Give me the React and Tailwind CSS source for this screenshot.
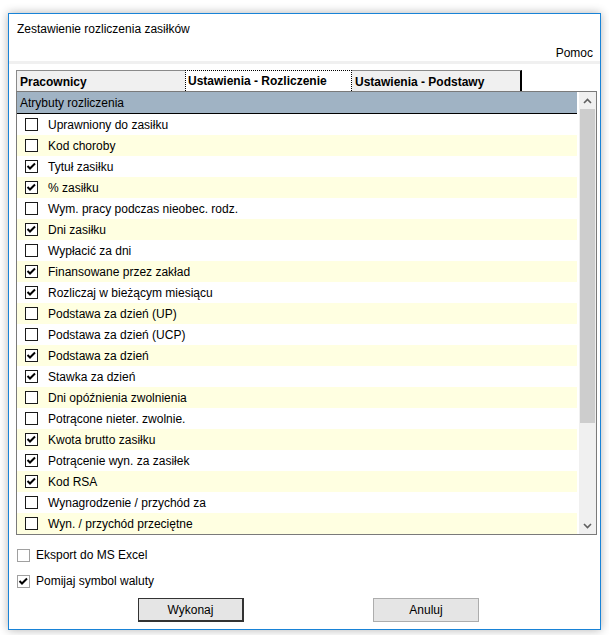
import React from 'react';

const rows = [
  ['Uprawniony do zasiłku', false],
  ['Kod choroby', false],
  ['Tytuł zasiłku', true],
  ['% zasiłku', true],
  ['Wym. pracy podczas nieobec. rodz.', false],
  ['Dni zasiłku', true],
  ['Wypłacić za dni', false],
  ['Finansowane przez zakład', true],
  ['Rozliczaj w bieżącym miesiącu', true],
  ['Podstawa za dzień (UP)', false],
  ['Podstawa za dzień (UCP)', false],
  ['Podstawa za dzień', true],
  ['Stawka za dzień', true],
  ['Dni opóźnienia zwolnienia', false],
  ['Potrącone nieter. zwolnie.', false],
  ['Kwota brutto zasiłku', true],
  ['Potrącenie wyn. za zasiłek', true],
  ['Kod RSA', true],
  ['Wynagrodzenie / przychód za', false],
  ['Wyn. / przychód przeciętne', false],
];

const Check = () => (
  <svg width="11" height="11" viewBox="0 0 11 11">
    <polyline points="1.5,5 4,7.5 9,2.5" fill="none" stroke="#000" strokeWidth="2" />
  </svg>
);

const Box = ({ checked, flat }) => (
  <div
    className={`w-[13px] h-[13px] shrink-0 flex items-center justify-center bg-white border ${
      flat ? 'border-[#a0a0a0]' : 'border-[#1a1a1a]'
    }`}
  >
    {checked && <Check />}
  </div>
);

const App = () => {
  return (
    <div
      className="w-[609px] h-[635px] bg-white pl-[8px] pt-[13px] text-[12px] text-black"
      style={{ fontFamily: '"Liberation Sans", Arial, sans-serif' }}
    >
      <div className="w-[593px] h-[617px] border border-[#1883d7] bg-white flex flex-col shadow-[0_0_9px_rgba(0,0,0,0.3)]">
        {/* Title */}
        <div className="h-[30px] pl-[8px] flex items-center">Zestawienie rozliczenia zasiłków</div>
        {/* Menu */}
        <div className="h-[17px] pr-[7px] flex items-center justify-end">Pomoc</div>
        <div className="h-[3px] bg-[#f0f0f0]" />
        <div className="h-[6px]" />

        <div className="ml-[7px]">
          {/* Tabs */}
          <div className="flex h-[21px]">
            <div className="w-[169px] bg-[#f0f0f0] border-l border-t border-[#8a8a8a] font-bold pl-[3px] pt-[4px] leading-[15px]">
              Pracownicy
            </div>
            <div className="w-[167px] bg-white border border-dotted border-black border-b-0 font-bold pl-[2px] pt-[3px] leading-[15px]">
              Ustawienia - Rozliczenie
            </div>
            <div className="w-[170px] bg-[#f0f0f0] border-t border-[#8a8a8a] border-r-2 border-r-black font-bold pl-[3px] pt-[4px] leading-[15px]">
              Ustawienia - Podstawy
            </div>
          </div>

          {/* List */}
          <div className="w-[581px] h-[444px] border border-[#7a7a7a] flex">
            <div className="w-[560px] flex flex-col">
              <div className="h-[21px] bg-[#a0b3c4] pl-[3px] flex items-center">Atrybuty rozliczenia</div>
              <div className="h-[1px] bg-black" />
              {rows.map(([label, checked], i) => (
                <div
                  key={label}
                  className={`h-[21px] shrink-0 flex items-center pl-[8px] gap-[10px] ${
                    i % 2 === 1 ? 'bg-[#ffffe1]' : 'bg-white'
                  }`}
                >
                  <Box checked={checked} />
                  <span>{label}</span>
                </div>
              ))}
            </div>
            <div className="w-[2px]" />
            {/* Scrollbar */}
            <div className="w-[17px] bg-[#f0f0f0] flex flex-col">
              <div className="h-[17px] flex items-center justify-center">
                <svg width="9" height="6" viewBox="0 0 9 6">
                  <polyline points="1,5 4.5,1.5 8,5" fill="none" stroke="#606060" strokeWidth="1.6" />
                </svg>
              </div>
              <div className="h-[314px] mx-[1px] bg-[#cdcdcd]" />
              <div className="flex-1" />
              <div className="h-[17px] flex items-center justify-center">
                <svg width="9" height="6" viewBox="0 0 9 6">
                  <polyline points="1,1 4.5,4.5 8,1" fill="none" stroke="#606060" strokeWidth="1.6" />
                </svg>
              </div>
            </div>
          </div>
        </div>

        {/* Options */}
        <div className="mt-[13px] pl-[8px] flex items-center gap-[6px] h-[14px]">
          <Box flat checked={false} />
          <span>Eksport do MS Excel</span>
        </div>
        <div className="mt-[12px] pl-[8px] flex items-center gap-[6px] h-[14px]">
          <Box flat checked />
          <span>Pomijaj symbol waluty</span>
        </div>

        {/* Buttons */}
        <div className="mt-[10px] flex h-[24px]">
          <button className="ml-[129px] w-[106px] h-[24px] bg-[#e5e5e5] border border-[#333] border-r-2 border-b-2">
            Wykonaj
          </button>
          <button className="ml-[129px] w-[106px] h-[24px] bg-[#e5e5e5] border border-[#adadad]">
            Anuluj
          </button>
        </div>
      </div>
    </div>
  );
};

export default App;
